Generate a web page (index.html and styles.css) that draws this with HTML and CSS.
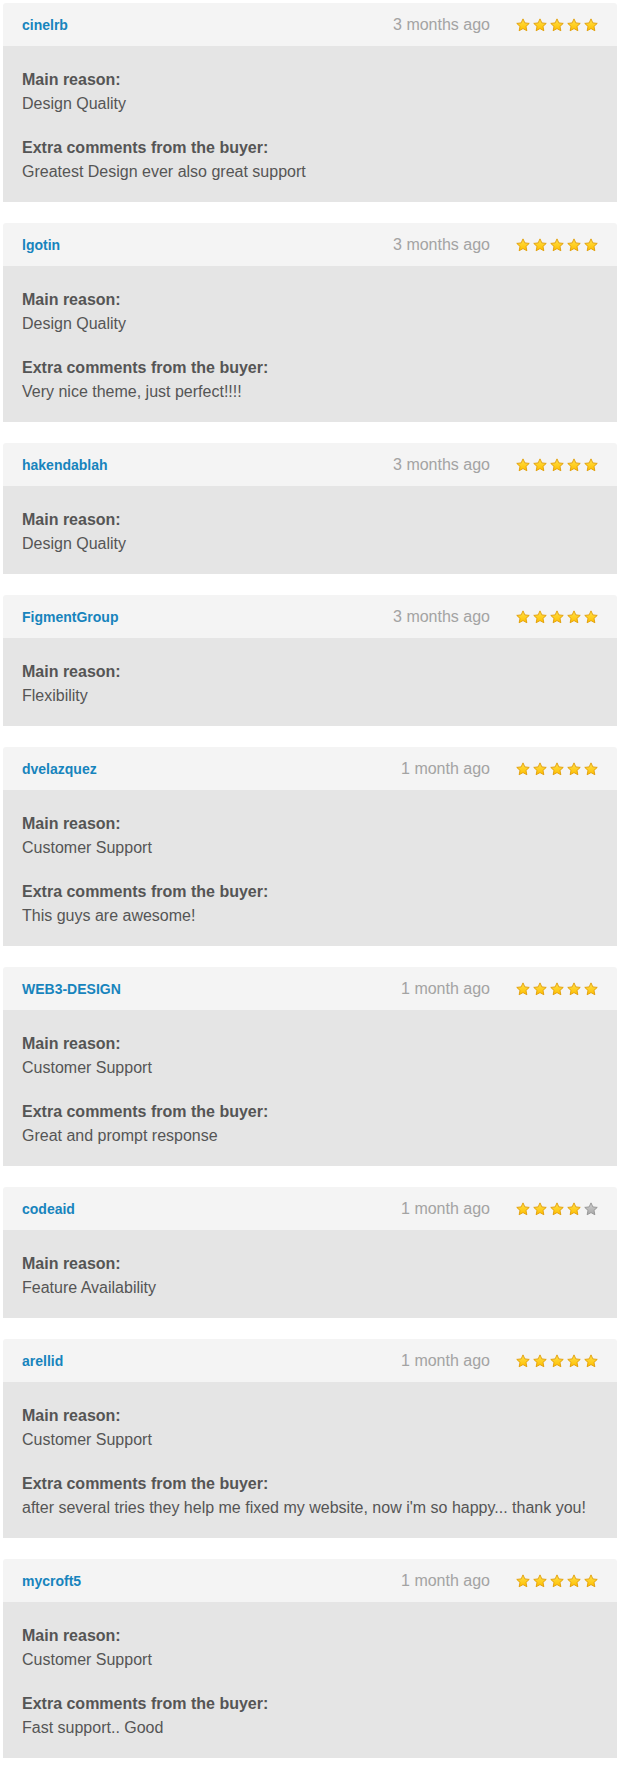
FILE: index.html
```html
<!DOCTYPE html>
<html lang="en">
<head>
  <meta charset="UTF-8">
  <title>Reviews</title>
  <link rel="stylesheet" href="styles.css">
</head>
<body>
  <svg width="0" height="0" class="defs">
    <defs>
      <linearGradient id="gold" x1="0" y1="0" x2="0" y2="1">
        <stop offset="0" stop-color="#ffe14a"/>
        <stop offset="1" stop-color="#ffbf00"/>
      </linearGradient>
      <linearGradient id="grey" x1="0" y1="0" x2="0" y2="1">
        <stop offset="0" stop-color="#cfcfcf"/>
        <stop offset="1" stop-color="#a8a8a8"/>
      </linearGradient>
      <symbol id="star" viewBox="0 0 16 16" overflow="visible">
        <path d="M8 1L10.12 5.59L15.13 6.18L11.42 9.61L12.41 14.57L8 12.1L3.59 14.57L4.58 9.61L.87 6.18L5.88 5.59Z"/>
      </symbol>
    </defs>
  </svg>

  <div class="reviews" id="reviews"></div>

  <script>
    const reviews = [
      { name: 'cinelrb', time: '3 months ago', stars: 5, reason: 'Design Quality', comment: 'Greatest Design ever also great support' },
      { name: 'lgotin', time: '3 months ago', stars: 5, reason: 'Design Quality', comment: 'Very nice theme, just perfect!!!!' },
      { name: 'hakendablah', time: '3 months ago', stars: 5, reason: 'Design Quality' },
      { name: 'FigmentGroup', time: '3 months ago', stars: 5, reason: 'Flexibility' },
      { name: 'dvelazquez', time: '1 month ago', stars: 5, reason: 'Customer Support', comment: 'This guys are awesome!' },
      { name: 'WEB3-DESIGN', time: '1 month ago', stars: 5, reason: 'Customer Support', comment: 'Great and prompt response' },
      { name: 'codeaid', time: '1 month ago', stars: 4, reason: 'Feature Availability' },
      { name: 'arellid', time: '1 month ago', stars: 5, reason: 'Customer Support', comment: "after several tries they help me fixed my website, now i'm so happy... thank you!" },
      { name: 'mycroft5', time: '1 month ago', stars: 5, reason: 'Customer Support', comment: 'Fast support.. Good' }
    ];

    const list = document.getElementById('reviews');

    reviews.forEach(r => {
      let stars = '';
      for (let i = 0; i < 5; i++) {
        const cls = i < r.stars ? 'star on' : 'star off';
        stars += '<svg class="' + cls + '"><use href="#star"/></svg>';
      }

      let body = '<div class="section"><div class="label">Main reason:</div><div class="value">' + r.reason + '</div></div>';
      if (r.comment) {
        body += '<div class="section"><div class="label">Extra comments from the buyer:</div><div class="value">' + r.comment + '</div></div>';
      }

      const card = document.createElement('div');
      card.className = 'review';
      card.innerHTML =
        '<div class="review-head">' +
          '<a class="buyer" href="#">' + r.name + '</a>' +
          '<span class="time">' + r.time + '</span>' +
          '<span class="stars">' + stars + '</span>' +
        '</div>' +
        '<div class="review-body">' + body + '</div>';
      list.appendChild(card);
    });
  </script>
</body>
</html>
```

FILE: styles.css
```css
body {
  margin: 0;
  padding: 3px 2px 0 3px;
  background: #fff;
  font-family: "Liberation Sans", Arial, sans-serif;
  color: #555;
}
.defs {
  position: absolute;
}
.review {
  margin-bottom: 21px;
}
.review-head {
  display: flex;
  align-items: center;
  height: 43px;
  padding: 0 19px 0 19px;
  background: #f4f4f4;
  border-radius: 3px 3px 0 0;
}
.buyer {
  color: #1784bd;
  font-size: 14px;
  font-weight: bold;
  text-decoration: none;
}
.time {
  margin-left: auto;
  margin-right: 26px;
  color: #a3a3a3;
  font-size: 16px;
}
.stars {
  display: flex;
  gap: 3px;
  margin-top: 1px;
}
.star {
  width: 14px;
  height: 14px;
  overflow: visible;
  stroke-width: 1;
  stroke-linejoin: round;
}
.star.on {
  fill: url(#gold);
  stroke: #e09a00;
}
.star.off {
  fill: url(#grey);
  stroke: #909090;
}
.review-body {
  background: #e5e5e5;
  padding: 22px 19px 18px;
}
.section + .section {
  margin-top: 20px;
}
.label {
  font-weight: bold;
  font-size: 16px;
  line-height: 24px;
}
.value {
  font-size: 16px;
  line-height: 24px;
}
```
